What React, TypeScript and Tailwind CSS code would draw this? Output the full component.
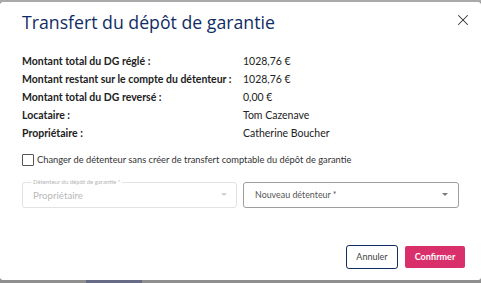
import { X } from "lucide-react";

const rows = [
  ["Montant total du DG réglé :", "1028,76 €"],
  ["Montant restant sur le compte du détenteur :", "1028,76 €"],
  ["Montant total du DG reversé :", "0,00 €"],
  ["Locataire :", "Tom Cazenave"],
  ["Propriétaire :", "Catherine Boucher"],
];

function Caret({ light }: { light?: boolean }) {
  return (
    <svg width="6" height="3" viewBox="0 0 6 3" className={light ? "text-[#cfcfcf]" : "text-[#7a7a7a]"}>
      <path d="M0 0h6L3 3z" fill="currentColor" />
    </svg>
  );
}

export default function App() {
  return (
    <div className="w-[481px] h-[283px] overflow-hidden bg-[#8f8f8f] flex flex-col font-['Lato',sans-serif]">
      {/* backdrop strip above the dialog */}
      <div className="h-[2px] shrink-0 bg-[#a9a9a9]" />
      <div className="h-[278px] shrink-0 bg-white rounded-[3px] flex flex-col px-[22px]">
        <div className="flex items-start justify-between pt-[7px]">
          <h1 className="font-['Open_Sans',sans-serif] text-[17.7px] leading-[26px] text-[#0f2d64]">
            Transfert du dépôt de garantie
          </h1>
          <button className="mt-[2px] mr-[-13px] text-[#333]">
            <X size={18} strokeWidth={1.4} />
          </button>
        </div>

        <div className="mt-[18px] flex flex-col">
          {rows.map(([k, v]) => (
            <div key={k} className="flex h-[18px] items-center text-[10.5px] text-[#222] whitespace-nowrap">
              <span className="w-[221px] font-bold">{k}</span>
              <span>{v}</span>
            </div>
          ))}
        </div>

        <label className="mt-[10px] flex items-center gap-[3px] text-[9.3px] text-[#333] whitespace-nowrap">
          <span className="w-[12px] h-[12px] border border-[#555] rounded-[1px] bg-white" />
          Changer de détenteur sans créer de transfert comptable du dépôt de garantie
        </label>

        <div className="mt-[15px] flex gap-[6px]">
          <div className="relative w-[215px] h-[26px] border border-[#e2e2e2] rounded-[3px] flex items-center justify-between pl-[10px] pr-[9px]">
            <span className="absolute left-[8px] top-[-5px] bg-white px-[2px] text-[6px] leading-[8px] text-[#b5b5b5] whitespace-nowrap">
              Détenteur du dépôt de garantie *
            </span>
            <span className="text-[9.7px] text-[#b8b8b8]">Propriétaire</span>
            <Caret light />
          </div>
          <div className="w-[216px] h-[26px] border border-[#9e9e9e] rounded-[3px] flex items-center justify-between pl-[11px] pr-[10px]">
            <span className="text-[8.9px] text-[#555]">Nouveau détenteur *</span>
            <Caret />
          </div>
        </div>

        <div className="mt-auto mb-[11px] flex justify-end gap-[7px] mr-[-6px]">
          <button className="w-[52px] h-[24px] border border-[#0f2d64] rounded-[3px] text-[9px] text-[#444] bg-white">
            Annuler
          </button>
          <button className="w-[60px] h-[22px] mt-[1px] rounded-[2px] bg-[#d9306b] text-[9px] font-bold text-white">
            Confirmer
          </button>
        </div>
      </div>
      <div className="flex-1 flex">
        <div className="w-[86px]" />
        <div className="w-[56px] bg-[#686b85]" />
      </div>
    </div>
  );
}
